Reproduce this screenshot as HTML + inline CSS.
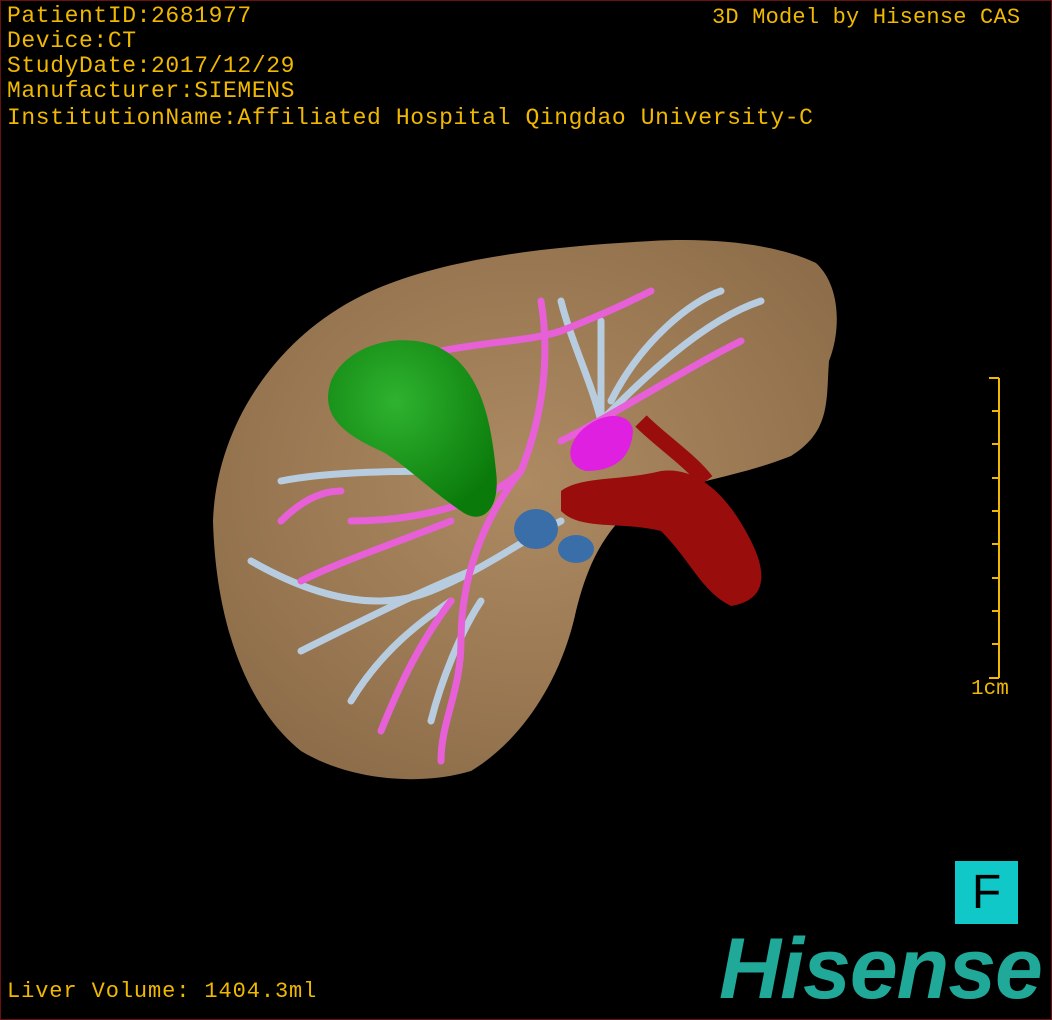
<!DOCTYPE html>
<html><head><style>
html,body{margin:0;padding:0;background:#000}
#c{position:relative;width:1050px;height:1018px;border:1px solid #6a1010;background:#000;overflow:hidden;font-family:"Liberation Mono",monospace;color:#f0b800}
.t{position:absolute;font-size:23px;line-height:25px;white-space:pre;letter-spacing:0.6px}
</style></head><body><div id="c">
<div class="t" style="left:6px;top:3px">PatientID:2681977
Device:CT
StudyDate:2017/12/29
Manufacturer:SIEMENS</div>
<div class="t" style="left:6px;top:105px">InstitutionName:Affiliated Hospital Qingdao University-C</div>
<div class="t" style="left:711px;top:4px;font-size:22px;letter-spacing:0.2px">3D Model by Hisense CAS</div>
<div class="t" style="left:6px;top:978px;font-size:22px;letter-spacing:0.9px">Liver Volume: 1404.3ml</div>
<div class="t" style="left:970px;top:676px;font-size:21px;letter-spacing:0">1cm</div>
<svg width="1050" height="1018" style="position:absolute;left:0;top:0">
<defs><radialGradient id="lg" cx="50%" cy="45%" r="60%"><stop offset="0" stop-color="#ad8a62"/><stop offset="1" stop-color="#8e6e4a"/></radialGradient>
<radialGradient id="gg" cx="40%" cy="35%" r="70%"><stop offset="0" stop-color="#2fb32f"/><stop offset="1" stop-color="#0a7a0a"/></radialGradient></defs>
<path d="M212,520 C215,430 270,340 360,295 C440,255 560,245 650,240 C720,236 780,245 815,262 C840,285 840,330 828,360 C825,400 830,430 790,455 C740,475 690,480 640,500 C600,530 585,570 575,610 C560,680 520,740 470,770 C420,785 350,780 300,750 C250,710 215,630 212,520Z" fill="url(#lg)"/>
<g fill="none" stroke="#b8cce0" stroke-width="7" stroke-linecap="round">
<path d="M250,560 C320,600 380,610 430,590 C480,570 520,540 560,520"/>
<path d="M300,650 C360,620 420,590 470,570"/>
<path d="M280,480 C330,470 400,470 470,470"/>
<path d="M350,700 C380,650 420,620 450,600"/>
<path d="M600,420 C640,380 700,320 760,300 M600,420 L600,320 M610,400 C640,340 690,300 720,290"/>
<path d="M560,300 C570,340 590,380 600,420"/>
<path d="M430,720 C440,680 460,630 480,600"/>
</g>
<g fill="none" stroke="#e860d8" stroke-width="7" stroke-linecap="round">
<path d="M540,300 C550,360 540,420 520,470 C490,500 420,520 350,520"/>
<path d="M520,470 C480,520 460,580 460,640 C460,690 440,720 440,760"/>
<path d="M440,350 C490,340 530,340 560,330 M560,330 C610,310 630,300 650,290"/>
<path d="M300,580 C340,560 400,540 450,520"/>
<path d="M380,730 C400,680 420,640 450,600"/>
<path d="M560,440 C620,410 680,370 740,340"/>
<path d="M280,520 C300,500 320,490 340,490"/>
</g>
<path d="M330,380 C345,345 395,330 435,345 C480,365 490,420 495,470 C500,510 480,525 460,510 C430,490 400,460 380,450 C335,430 320,410 330,380Z" fill="url(#gg)"/>
<path d="M580,430 C600,410 630,410 632,430 C630,460 610,470 585,470 C565,465 565,445 580,430Z" fill="#e020e0"/>
<path d="M560,490 C580,475 620,480 660,470 C700,465 730,500 750,540 C770,580 760,600 730,605 C700,590 690,560 660,530 C620,520 580,530 560,510Z" fill="#9a0d0d"/>
<path d="M640,420 C660,440 690,460 705,480" stroke="#9a0d0d" stroke-width="16" fill="none"/>
<ellipse cx="535" cy="528" rx="22" ry="20" fill="#3a6ea8"/>
<ellipse cx="575" cy="548" rx="18" ry="14" fill="#3a6ea8"/>
<g stroke="#f0b800" stroke-width="2" fill="none">
<path d="M998,377 V677 M988,377 H998 M988,677 H998 M991,410 H998 M991,443 H998 M991,477 H998 M991,510 H998 M991,543 H998 M991,577 H998 M991,610 H998 M991,643 H998"/>
</g>
</svg>
<div style="position:absolute;left:954px;top:860px;width:63px;height:63px;background:#10c8c8;color:#000;font-family:'Liberation Sans',sans-serif;font-size:48px;line-height:63px;text-align:center">F</div>
<div style="position:absolute;left:718px;top:920px;font-family:'Liberation Sans',sans-serif;font-weight:bold;font-style:italic;font-size:86px;line-height:96px;color:#20a898;letter-spacing:-1px">Hisense</div>
</div></body></html>
